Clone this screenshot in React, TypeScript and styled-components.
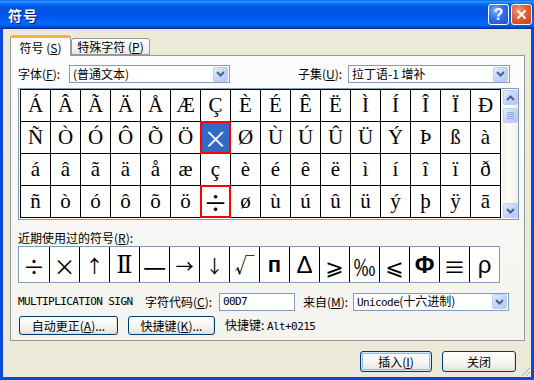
import React from "react";
import styled, { createGlobalStyle } from "styled-components";

const UI = `"Noto Sans CJK SC", "DejaVu Sans", sans-serif`;
const MONO = `"DejaVu Sans Mono", "Noto Sans CJK SC", monospace`;
const SERIF = `"Liberation Serif", "DejaVu Serif", serif`;
const SANS = `"Liberation Sans", Arial, sans-serif`;

const GlobalStyle = createGlobalStyle`
  html, body { margin: 0; padding: 0; background: #fff; }
  body { font-family: ${UI}; font-size: 12px; color: #000; }
`;

const gridRows = [
  "ÁÂÃÄÅÆÇÈÉÊËÌÍÎÏÐ",
  "ÑÒÓÔÕÖ×ØÙÚÛÜÝÞßà",
  "áâãäåæçèéêëìíîïð",
  "ñòóôõö÷øùúûüýþÿā",
];

type Recent = { ch: string; font: "cjk" | "serif" | "sans"; size: number; bold?: boolean };

const recent: Recent[] = [
  { ch: "÷", font: "cjk", size: 22 },
  { ch: "×", font: "cjk", size: 22 },
  { ch: "↑", font: "cjk", size: 18 },
  { ch: "Ⅱ", font: "serif", size: 24 },
  { ch: "—", font: "cjk", size: 26 },
  { ch: "→", font: "cjk", size: 18 },
  { ch: "↓", font: "cjk", size: 18 },
  { ch: "√", font: "cjk", size: 20 },
  { ch: "п", font: "sans", size: 22, bold: true },
  { ch: "Δ", font: "sans", size: 24 },
  { ch: "⩾", font: "cjk", size: 22 },
  { ch: "‰", font: "cjk", size: 22 },
  { ch: "⩽", font: "cjk", size: 22 },
  { ch: "Φ", font: "sans", size: 24, bold: true },
  { ch: "≡", font: "cjk", size: 22 },
  { ch: "ρ", font: "sans", size: 24 },
];

const fontFor = (f: Recent["font"]) => (f === "cjk" ? UI : f === "serif" ? SERIF : SANS);

const Window = styled.div`
  width: 534px;
  height: 380px;
  display: flex;
  flex-direction: column;
  background: #0b4ad9;
  overflow: hidden;
`;

const TitleBar = styled.div`
  height: 29px;
  flex: none;
  display: flex;
  align-items: center;
  padding: 0 2px 0 8px;
  background: linear-gradient(
    to bottom,
    #0058ee 0%,
    #3593ff 4%,
    #288eff 7%,
    #127dff 10%,
    #036ffc 14%,
    #0262ee 18%,
    #0057e5 24%,
    #0054e3 30%,
    #0055eb 56%,
    #005bf5 66%,
    #026afe 76%,
    #0062ef 86%,
    #0052d6 92%,
    #0040ab 96%,
    #003092 100%
  );
`;

const Title = styled.div`
  flex: 1;
  color: #fff;
  font-weight: bold;
  font-size: 14px;
  text-shadow: 1px 1px 0 #0a1883;
  letter-spacing: 1px;
`;

const CapButton = styled.div<{ $close?: boolean }>`
  width: 19px;
  height: 19px;
  margin-left: 2px;
  border: 1px solid #fff;
  border-radius: 3px;
  display: flex;
  align-items: center;
  justify-content: center;
  background: ${(p) =>
    p.$close
      ? "radial-gradient(circle at 35% 30%, #f29c7f 0%, #e35d36 45%, #c6401b 100%)"
      : "radial-gradient(circle at 35% 30%, #7fb0ff 0%, #2e6ff0 45%, #1c4fd0 100%)"};
  color: #fff;
  font: bold 16px ${SANS};
`;

const Frame = styled.div`
  position: relative;
  flex: 1;
  margin: 0 3px 3px;
  background: #ece9d8;
  display: flex;
  flex-direction: column;
`;

const TabRow = styled.div`
  height: 20px;
  margin: 6px 0 0 7px;
  display: flex;
  align-items: flex-end;
`;

const Tab = styled.div<{ $active?: boolean }>`
  position: relative;
  z-index: ${(p) => (p.$active ? 2 : 1)};
  width: ${(p) => (p.$active ? 61 : 79)}px;
  height: ${(p) => (p.$active ? 21 : 17)}px;
  margin-bottom: ${(p) => (p.$active ? -1 : 0)}px;
  box-sizing: border-box;
  display: flex;
  align-items: center;
  justify-content: center;
  border: 1px solid #919b9c;
  border-bottom: ${(p) => (p.$active ? "none" : "1px solid #919b9c")};
  border-top: ${(p) => (p.$active ? "3px solid #f6b43a" : "1px solid #919b9c")};
  border-radius: 3px 3px 0 0;
  background: ${(p) => (p.$active ? "#fcfcfe" : "linear-gradient(#ffffff, #f3f2ec 70%, #e9e8e1)")};
  font-size: 12px;
  white-space: nowrap;
`;

const Panel = styled.div`
  height: 286px;
  box-sizing: border-box;
  margin: 0 6px 0 7px;
  border: 1px solid #919b9c;
  background: linear-gradient(#fcfcfe, #f4f3ee);
  padding: 0 0 0 7px;
  display: flex;
  flex-direction: column;
`;

const Row = styled.div<{ $mt: number; $h: number }>`
  display: flex;
  align-items: center;
  margin-top: ${(p) => p.$mt}px;
  height: ${(p) => p.$h}px;
  white-space: nowrap;
`;

const Label = styled.div<{ $w?: number; $mono?: boolean; $ml?: number }>`
  width: ${(p) => (p.$w ? `${p.$w}px` : "auto")};
  margin-left: ${(p) => p.$ml ?? 0}px;
  flex: none;
  font-family: ${(p) => (p.$mono ? MONO : UI)};
  font-size: ${(p) => (p.$mono ? 11 : 12)}px;
  letter-spacing: ${(p) => (p.$mono ? "-0.6px" : "normal")};
  line-height: 16px;
`;

const Mono = styled.span`
  font-family: ${MONO};
  font-size: 11px;
  letter-spacing: -0.6px;
`;

const Combo = styled.div<{ $w: number }>`
  width: ${(p) => p.$w}px;
  height: 18px;
  box-sizing: border-box;
  border: 1px solid #7f9db9;
  background: #fff;
  display: flex;
  align-items: center;
  padding: 0 1px 0 3px;
  flex: none;
`;

const ComboText = styled.div`
  flex: 1;
  font-size: 12px;
  line-height: 16px;
  white-space: nowrap;
`;

const BlueBtn = styled.div`
  width: 15px;
  height: 15px;
  box-sizing: border-box;
  border: 1px solid #bccdf4;
  border-radius: 2px;
  background: linear-gradient(135deg, #e4edfe 0%, #c6d7fb 45%, #b4c8f6 100%);
  display: flex;
  align-items: center;
  justify-content: center;
  flex: none;
`;

const Chevron = ({ up }: { up?: boolean }) => (
  <svg width="9" height="6" viewBox="0 0 9 6">
    <path
      d={up ? "M1 5 L4.5 1.5 L8 5" : "M1 1 L4.5 4.5 L8 1"}
      fill="none"
      stroke="#4d6185"
      strokeWidth="2"
    />
  </svg>
);

const GridFrame = styled.div`
  margin-top: 5px;
  width: 501px;
  height: 132px;
  box-sizing: border-box;
  border: 1px solid #7f9db9;
  background: #fff;
  padding-left: 1px;
  display: flex;
`;

const CharGrid = styled.div`
  display: grid;
  grid-template-columns: repeat(16, 29px);
  grid-template-rows: repeat(4, 31px);
  gap: 1px;
  border: 1px solid #000;
  background: #000;
  align-self: flex-start;
`;

const Cell = styled.div<{ $sel?: boolean; $mark?: boolean; $cjk?: boolean }>`
  background: ${(p) => (p.$sel ? "#316ac5" : "#fff")};
  color: ${(p) => (p.$sel ? "#fff" : "#000")};
  display: flex;
  align-items: center;
  justify-content: center;
  font-family: ${(p) => (p.$cjk ? UI : SERIF)};
  font-size: ${(p) => (p.$cjk ? 24 : 21)}px;
  line-height: 1;
  outline: ${(p) => (p.$mark ? "2px solid #ff0000" : "none")};
  outline-offset: -1px;
  position: relative;
  z-index: ${(p) => (p.$mark ? 1 : 0)};
`;

const ScrollBar = styled.div`
  width: 17px;
  margin-left: 1px;
  display: flex;
  flex-direction: column;
  align-items: center;
  padding: 1px 0 1px;
  box-sizing: border-box;
  background: linear-gradient(to right, #f3f1ea, #fefefb 40%, #f0efe8);
`;

const Thumb = styled(BlueBtn)`
  margin-top: 3px;
  flex-direction: column;
  gap: 1px;
`;

const ScrollGap = styled.div`
  flex: 1;
`;

const GripLine = styled.div`
  width: 7px;
  height: 1px;
  background: #8fa8e0;
`;

const RecentBox = styled.div`
  margin-top: 1px;
  width: 482px;
  height: 37px;
  box-sizing: border-box;
  border: 1px solid #7f9db9;
  background: #fff;
  display: flex;
`;

const RecentCell = styled.div<{ $first?: boolean; $font: string; $size: number; $bold?: boolean }>`
  width: ${(p) => (p.$first ? 30 : 29)}px;
  flex: none;
  border-left: ${(p) => (p.$first ? "none" : "1px solid #000")};
  display: flex;
  align-items: center;
  justify-content: center;
  font-family: ${(p) => p.$font};
  font-size: ${(p) => p.$size}px;
  font-weight: ${(p) => (p.$bold ? "bold" : "normal")};
  line-height: 1;
`;

const TextBox = styled.div<{ $w: number }>`
  width: ${(p) => p.$w}px;
  height: 18px;
  box-sizing: border-box;
  border: 1px solid #7f9db9;
  background: #fff;
  padding: 0 3px;
  display: flex;
  align-items: center;
  font-family: ${MONO};
  font-size: 11px;
  letter-spacing: -0.6px;
  flex: none;
`;

const Button = styled.div<{ $w: number; $h?: number; $default?: boolean; $ml?: number }>`
  width: ${(p) => p.$w}px;
  height: ${(p) => p.$h ?? 19}px;
  margin-left: ${(p) => p.$ml ?? 0}px;
  box-sizing: border-box;
  flex: none;
  border: 1px solid #003c74;
  border-radius: 3px;
  background: linear-gradient(#ffffff, #f6f5f1 55%, #e8e7e0 90%, #d8d5cb);
  box-shadow: ${(p) =>
    p.$default
      ? "inset 0 0 0 1px #cee7ff, inset 0 0 0 2px #98b8ea"
      : "inset -1px -1px 0 #e0ddd3"};
  display: flex;
  align-items: center;
  justify-content: center;
  font-size: 12px;
  white-space: nowrap;
`;

const Footer = styled.div`
  display: flex;
  justify-content: flex-end;
  margin-top: 10px;
  padding-right: 15px;
`;

const Grip = styled.svg`
  position: absolute;
  right: 0;
  bottom: 0;
`;

export default function App() {
  return (
    <>
      <GlobalStyle />
      <Window>
        <TitleBar>
          <Title>符号</Title>
          <CapButton>?</CapButton>
          <CapButton $close>
            <svg width="11" height="11" viewBox="0 0 11 11">
              <path d="M1.5 1.5 L9.5 9.5 M9.5 1.5 L1.5 9.5" stroke="#fff" strokeWidth="2" />
            </svg>
          </CapButton>
        </TitleBar>

        <Frame>
          <TabRow>
            <Tab $active>
              符号 (<u>S</u>)
            </Tab>
            <Tab>
              特殊字符 (<u>P</u>)
            </Tab>
          </TabRow>

          <Panel>
            <Row $mt={9} $h={18}>
              <Label $w={51}>
                字体(<u>F</u>):
              </Label>
              <Combo $w={161}>
                <ComboText>(普通文本)</ComboText>
                <BlueBtn>
                  <Chevron />
                </BlueBtn>
              </Combo>
              <Label $w={68} />
              <Label $w={50}>
                子集(<u>U</u>):
              </Label>
              <Combo $w={162}>
                <ComboText>拉丁语-1 增补</ComboText>
                <BlueBtn>
                  <Chevron />
                </BlueBtn>
              </Combo>
            </Row>

            <GridFrame>
              <CharGrid>
                {gridRows.map((row, r) =>
                  Array.from(row).map((ch, c) => (
                    <Cell
                      key={`${r}-${c}`}
                      $sel={r === 1 && c === 6}
                      $mark={c === 6 && (r === 1 || r === 3)}
                      $cjk={c === 6 && (r === 1 || r === 3)}
                    >
                      {ch}
                    </Cell>
                  ))
                )}
              </CharGrid>
              <ScrollBar>
                <BlueBtn>
                  <Chevron up />
                </BlueBtn>
                <Thumb>
                  <GripLine />
                  <GripLine />
                  <GripLine />
                  <GripLine />
                </Thumb>
                <ScrollGap />
                <BlueBtn>
                  <Chevron />
                </BlueBtn>
              </ScrollBar>
            </GridFrame>

            <Row $mt={11} $h={14}>
              <Label>
                近期使用过的符号(<u>R</u>):
              </Label>
            </Row>
            <RecentBox>
              {recent.map((r, i) => (
                <RecentCell
                  key={i}
                  $first={i === 0}
                  $font={fontFor(r.font)}
                  $size={r.size}
                  $bold={r.bold}
                >
                  {r.ch}
                </RecentCell>
              ))}
            </RecentBox>

            <Row $mt={9} $h={19}>
              <Label $w={127} $mono>
                MULTIPLICATION SIGN
              </Label>
              <Label $w={74}>
                字符代码(<u>C</u>):
              </Label>
              <TextBox $w={76}>00D7</TextBox>
              <Label $w={8} />
              <Label $w={50}>
                来自(<u>M</u>):
              </Label>
              <Combo $w={156}>
                <ComboText>
                  <Mono>Unicode</Mono>(十六进制)
                </ComboText>
                <BlueBtn>
                  <Chevron />
                </BlueBtn>
              </Combo>
            </Row>

            <Row $mt={5} $h={19}>
              <Button $w={99} $ml={1}>
                自动更正(<u>A</u>)...
              </Button>
              <Button $w={87} $ml={10}>
                快捷键(<u>K</u>)...
              </Button>
              <Label $ml={10}>
                快捷键: <Mono>Alt+0215</Mono>
              </Label>
            </Row>
          </Panel>

          <Footer>
            <Button $w={72} $h={21} $default>
              插入(<u>I</u>)
            </Button>
            <Button $w={74} $h={21} $ml={10}>
              关闭
            </Button>
          </Footer>

          <Grip width="12" height="12" viewBox="0 0 12 12">
            <path d="M11 3 L3 11 M11 7 L7 11" stroke="#c6c2b2" strokeWidth="1.5" />
            <path d="M12 4 L4 12 M12 8 L8 12" stroke="#fff" strokeWidth="1" />
          </Grip>
        </Frame>
      </Window>
    </>
  );
}
